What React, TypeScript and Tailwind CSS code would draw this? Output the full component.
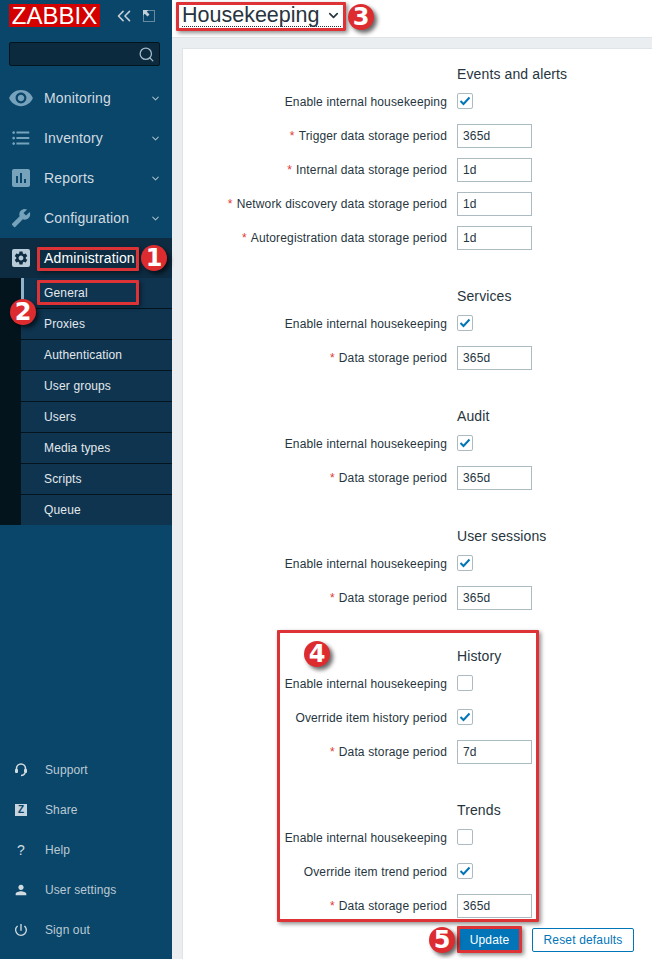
import { ChevronDown, ChevronsLeft, Search } from 'lucide-react'
import {
  MdVisibility,
  MdFormatListBulleted,
  MdAssessment,
  MdBuild,
  MdSettings,
  MdPerson,
  MdPowerSettingsNew,
} from 'react-icons/md'

const topNav = [
  { label: 'Monitoring', icon: <MdVisibility size={26} /> },
  { label: 'Inventory', icon: <MdFormatListBulleted size={22} /> },
  { label: 'Reports', icon: <MdAssessment size={24} /> },
  { label: 'Configuration', icon: <MdBuild size={20} className="-scale-x-100" /> },
]

const subNav = ['General', 'Proxies', 'Authentication', 'User groups', 'Users', 'Media types', 'Scripts', 'Queue']

type Row =
  | { kind: 'check'; label: string; checked: boolean }
  | { kind: 'input'; label: string; value: string }

const sections: { title: string; rows: Row[] }[] = [
  {
    title: 'Events and alerts',
    rows: [
      { kind: 'check', label: 'Enable internal housekeeping', checked: true },
      { kind: 'input', label: 'Trigger data storage period', value: '365d' },
      { kind: 'input', label: 'Internal data storage period', value: '1d' },
      { kind: 'input', label: 'Network discovery data storage period', value: '1d' },
      { kind: 'input', label: 'Autoregistration data storage period', value: '1d' },
    ],
  },
  {
    title: 'Services',
    rows: [
      { kind: 'check', label: 'Enable internal housekeeping', checked: true },
      { kind: 'input', label: 'Data storage period', value: '365d' },
    ],
  },
  {
    title: 'Audit',
    rows: [
      { kind: 'check', label: 'Enable internal housekeeping', checked: true },
      { kind: 'input', label: 'Data storage period', value: '365d' },
    ],
  },
  {
    title: 'User sessions',
    rows: [
      { kind: 'check', label: 'Enable internal housekeeping', checked: true },
      { kind: 'input', label: 'Data storage period', value: '365d' },
    ],
  },
  {
    title: 'History',
    rows: [
      { kind: 'check', label: 'Enable internal housekeeping', checked: false },
      { kind: 'check', label: 'Override item history period', checked: true },
      { kind: 'input', label: 'Data storage period', value: '7d' },
    ],
  },
  {
    title: 'Trends',
    rows: [
      { kind: 'check', label: 'Enable internal housekeeping', checked: false },
      { kind: 'check', label: 'Override item trend period', checked: true },
      { kind: 'input', label: 'Data storage period', value: '365d' },
    ],
  },
]

function Checkbox({ checked }: { checked: boolean }) {
  return (
    <span className="mb-[2px] flex h-4 w-4 items-center justify-center rounded-[2px] border border-[#acbbc2] bg-white">
      {checked && (
        <svg width="12" height="10" viewBox="0 0 12 10" fill="none">
          <path d="M1.5 5 L4.5 8 L10.5 1.5" stroke="#0275b8" strokeWidth="2" />
        </svg>
      )}
    </span>
  )
}

function FormRow({ row }: { row: Row }) {
  return (
    <div className="flex h-6 items-center">
      <div className="w-[264px] shrink-0 text-right tracking-[0.15px] whitespace-nowrap">
        {row.kind === 'input' && <span className="mr-[4px] text-[#e33734]">*</span>}
        {row.label}
      </div>
      <div className="ml-[10px] flex">
        {row.kind === 'check' ? (
          <Checkbox checked={row.checked} />
        ) : (
          <div className="flex h-6 w-[75px] items-center border border-[#acbbc2] bg-white pl-[5px] tracking-[0.17px]">
            {row.value}
          </div>
        )}
      </div>
    </div>
  )
}

function RedBox({ className }: { className: string }) {
  return (
    <div
      className={`pointer-events-none absolute rounded-[1px] border-[3px] border-[#dd3336] shadow-[2px_2px_4px_rgba(0,0,0,0.45)] ${className}`}
    />
  )
}

function Badge({ n, className }: { n: number; className: string }) {
  return (
    <div
      className={`absolute flex h-[26px] w-[26px] items-center justify-center rounded-full bg-[#dd2c30] text-[24px] leading-none font-bold text-white shadow-[3px_3px_4px_rgba(0,0,0,0.6)] [font-family:'DejaVu_Sans',sans-serif] ${className}`}
    >
      {n}
    </div>
  )
}

export default function App() {
  return (
    <div className="relative flex h-[959px] w-[652px] overflow-hidden font-['Liberation_Sans',Arial,sans-serif] text-[12px] text-[#27353e]">
      <aside className="flex h-full w-[172px] shrink-0 flex-col bg-[#0a466a] text-[#d1dbe0]">
        <div className="flex h-[42px] items-start pt-1 pl-[9px]">
          <div className="flex h-[23px] w-[91px] items-center justify-center bg-[#d40000] text-[24px] leading-none font-light text-white">
            ZABBIX
          </div>
          <ChevronsLeft size={22} strokeWidth={1.7} className="mt-[1px] ml-[13px] text-[#c3d0d8]" />
          <svg width="14" height="14" viewBox="0 0 14 14" className="mt-[5px] ml-[7px]" fill="none">
            <rect x="1.5" y="1.5" width="11" height="11" stroke="#c3d0d8" strokeDasharray="1 1" />
            <path d="M1 1 H6.5 L4.8 2.7 L7.5 5.5 L5.5 7.5 L2.7 4.8 L1 6.5 Z" fill="#c3d0d8" />
          </svg>
        </div>
        <div className="mx-[9px] flex h-6 w-[151px] items-center justify-end rounded-[2px] border border-[#04141d] bg-[#0c2a3e] pr-1">
          <Search size={17} strokeWidth={1.8} className="text-[#a6bccb]" />
        </div>
        <nav className="mt-3 text-[14px] tracking-[0.15px]">
          {topNav.map((item) => (
            <div key={item.label} className="flex h-10 items-center">
              <span className="flex w-11 shrink-0 justify-center pr-[2px] text-[#77a2bb]">{item.icon}</span>
              <span className="flex-1">{item.label}</span>
              <ChevronDown size={11} strokeWidth={2.2} className="mr-[11px] text-[#a9bfcc]" />
            </div>
          ))}
          <div className="flex h-10 items-center bg-[#0d2c42] text-white">
            <span className="ml-3 flex h-[18px] w-[18px] items-center justify-center rounded-[2px] bg-[#b7cbd8] text-[#0d2c42]">
              <MdSettings size={16} />
            </span>
            <span className="ml-[14px]">Administration</span>
          </div>
        </nav>
        <ul className="flex flex-col bg-[#04141d] pl-[21px] text-[12px] tracking-[0.15px] text-[#e3e9ec]">
          {subNav.map((label, i) => (
            <li
              key={label}
              className={`flex items-center bg-[#0e3450] pl-[23px] ${i < subNav.length - 1 ? 'h-[31px] border-b border-[#04141d]' : 'h-[30px]'}`}
            >
              {label}
            </li>
          ))}
        </ul>
        <div className="absolute top-[278px] left-[21px] h-6 w-[3px] bg-[#8fb3cb]" />
        <div className="mt-auto mb-[9px] text-[12px] tracking-[0.1px] text-[#bccad3]">
          <div className="flex h-10 items-center pl-[15px]">
            <svg width="12" height="14" viewBox="0 0 12 14" fill="none" className="mr-[18px]">
              <path d="M1.5 8 V5.5 a4.5 4.5 0 0 1 9 0 V8" stroke="#d1dbe0" strokeWidth="1.6" />
              <rect x="0" y="6" width="3" height="4" rx="1" fill="#d1dbe0" />
              <rect x="9" y="6" width="3" height="4" rx="1" fill="#d1dbe0" />
              <path d="M10 10 Q9 12.5 6 12.5" stroke="#d1dbe0" strokeWidth="1.5" />
            </svg>
            Support
          </div>
          <div className="flex h-10 items-center pl-[15px]">
            <span className="mr-[18px] flex h-3 w-3 items-center justify-center bg-[#c5d4de] text-[10px] leading-none font-bold text-[#0a466a]">
              Z
            </span>
            Share
          </div>
          <div className="flex h-10 items-center pl-[15px]">
            <span className="mr-[18px] w-3 text-center text-[14px] text-[#d1dbe0]">?</span>
            Help
          </div>
          <div className="flex h-10 items-center pl-[13px]">
            <MdPerson size={16} className="mr-[16px] text-[#d1dbe0]" />
            User settings
          </div>
          <div className="flex h-10 items-center pl-[13px]">
            <MdPowerSettingsNew size={16} className="mr-[16px] text-[#d1dbe0]" />
            Sign out
          </div>
        </div>
      </aside>

      <main className="flex min-w-0 flex-1 flex-col bg-[#ebeef0]">
        <header className="flex h-[38px] shrink-0 items-start border-b border-[#dfe4e7] bg-white pt-[4px] pl-[10px]">
          <h1 className="flex items-center border-b border-dotted border-[#27353e] text-[21.5px] leading-[22px] font-normal">
            Housekeeping
            <ChevronDown size={15} strokeWidth={2.6} className="ml-[7px]" />
          </h1>
        </header>
        <div className="mt-[10px] ml-[10px] flex-1 border-t border-l border-[#dfe4e7] bg-white pt-[17px]">
          <form className="flex flex-col gap-[38px]">
            {sections.map((section) => (
              <section key={section.title} className="flex flex-col gap-[10px]">
                <h2 className="mb-[-2px] h-4 pl-[274px] text-[14px] leading-4 font-normal tracking-[0.12px]">
                  {section.title}
                </h2>
                {section.rows.map((row) => (
                  <FormRow key={row.label} row={row} />
                ))}
              </section>
            ))}
          </form>
          <div className="mt-[10px] flex gap-[11px] pl-[275px]">
            <button className="h-[23px] w-[63px] rounded-[2px] bg-[#0275b8] tracking-[0.17px] text-white">Update</button>
            <button className="h-[24px] w-[102px] rounded-[2px] border border-[#0275b8] bg-white tracking-[0.17px] text-[#0275b8]">
              Reset defaults
            </button>
          </div>
        </div>
      </main>

      <RedBox className="top-[247px] left-[37px] h-[24px] w-[102px]" />
      <RedBox className="top-[280px] left-[37px] h-[25px] w-[102px]" />
      <RedBox className="top-[2px] left-[176px] h-[29px] w-[170px]" />
      <RedBox className="top-[630px] left-[277px] h-[292px] w-[262px]" />
      <RedBox className="top-[926px] left-[457px] h-[27px] w-[65px]" />

      <Badge n={1} className="top-[245px] left-[141px]" />
      <Badge n={2} className="top-[299px] left-[10px]" />
      <Badge n={3} className="top-[4px] left-[348px]" />
      <Badge n={4} className="top-[641px] left-[304px]" />
      <Badge n={5} className="top-[927px] left-[429px]" />
    </div>
  )
}
